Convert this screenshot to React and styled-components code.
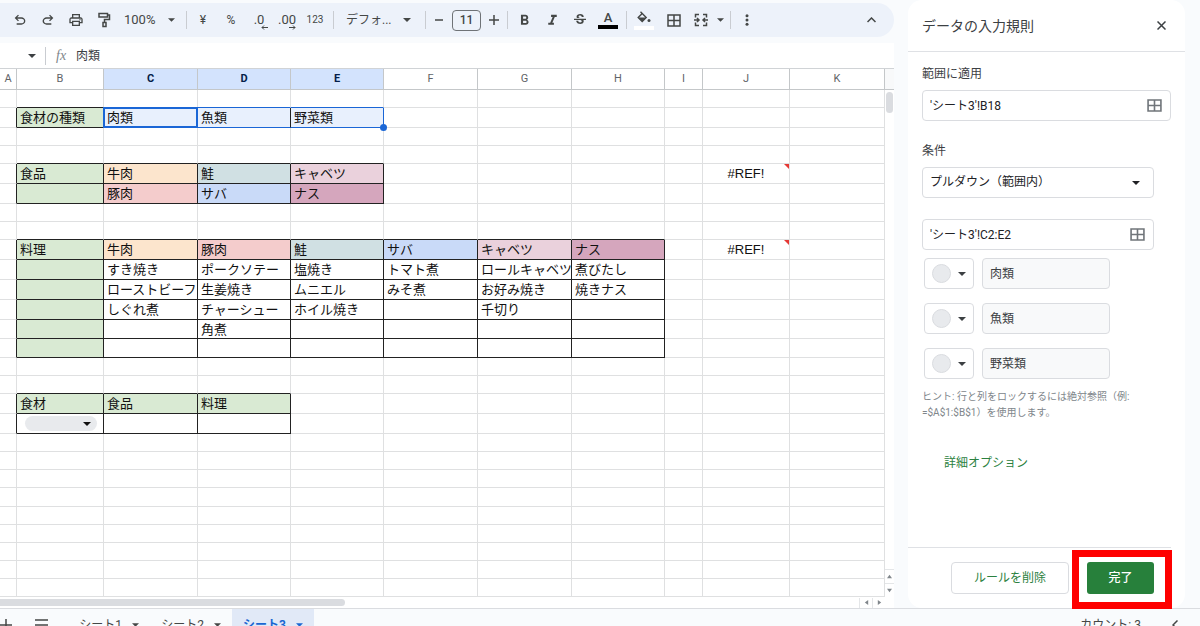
import React from "react";
import styled, { createGlobalStyle, css } from "styled-components";
import { MdFormatBold, MdFormatItalic, MdStrikethroughS } from "react-icons/md";

const GlobalStyle = createGlobalStyle`
  *, *::before, *::after { box-sizing: border-box; }
  html, body { height: 100%; }
  body {
    margin: 0;
    overflow: hidden;
    background: #f9fbfd;
    color: #3c4043;
    font: 12px/16px Roboto, "Noto Sans CJK JP", sans-serif;
  }
  button, input, select { font: inherit; color: inherit; margin: 0; padding: 0; }
  button { background: none; border: 0; cursor: pointer; }
`;

const BLUE = "#1a66d6";
const GREEN = "#d9ead3";
const ORANGE = "#fce5cd";
const RED = "#f4cccc";
const TEAL = "#d0e0e3";
const SKY = "#c9daf8";
const PINK = "#ead1dc";
const MAUVE = "#d5a6bd";

/* ---------- page ---------- */

const Page = styled.div`
  display: flex;
  flex-direction: column;
`;

const Workspace = styled.div`
  display: grid;
  grid-template-columns: minmax(0, 1fr) 277px;
  gap: 14px;
  padding-right: 15px;
`;

const Editor = styled.main`
  min-width: 0;
  padding-top: 3px;
`;

/* ---------- toolbar ---------- */

const Toolbar = styled.div`
  display: flex;
  align-items: center;
  height: 34px;
  padding: 0 9px 0 6px;
  background: #edf2fa;
  border-radius: 0 17px 17px 0;
  color: #444746;
`;

const Tool = styled.button`
  position: relative;
  display: flex;
  align-items: center;
  justify-content: center;
  flex: none;
  width: ${(p) => p.$w || 28}px;
  height: 28px;
  font-size: ${(p) => p.$size || 12}px;
`;

const MenuTool = styled(Tool)`
  justify-content: space-between;
  padding: 0 ${(p) => p.$pad || 0}px;
`;

const Divider = styled.span`
  flex: none;
  width: 1px;
  height: 18px;
  margin: 0 ${(p) => p.$r || 0}px 0 ${(p) => p.$l || 0}px;
  background: #c9ccd1;
`;

const Spacer = styled.span`
  flex: 1;
`;

const SizeInput = styled.input`
  width: 29px;
  height: 21px;
  border: 1px solid #6f7377;
  border-radius: 4px;
  background: transparent;
  text-align: center;
  font-size: 12px;
  font-weight: 500;
`;

const ArrowUnder = styled.svg`
  position: absolute;
  right: 5px;
  bottom: 4px;
`;

const Swatch = styled.span`
  display: flex;
  flex-direction: column;
  align-items: center;
  gap: 1px;
  font: 500 13px/13px Roboto, sans-serif;

  &::after {
    content: "";
    width: 20px;
    height: 4px;
    background: ${(p) => p.$color};
  }
`;

/* ---------- formula bar ---------- */

const FormulaBar = styled.div`
  display: flex;
  align-items: center;
  height: 25px;
  margin-top: 6px;
  padding-left: 24px;
  background: #fff;
`;

const Fx = styled.span`
  width: 20px;
  margin-left: 10px;
  color: #80868b;
  font: italic 14px/18px "Liberation Serif", serif;
`;

const FormulaInput = styled.input`
  flex: 1;
  min-width: 0;
  border: 0;
  background: transparent;
`;

/* ---------- sheet ---------- */

const SheetArea = styled.div`
  display: grid;
  grid-template-columns: minmax(0, 1fr) 9px;
  border-top: 1px solid #d0d3d6;
  background: #fff;
`;

const Sheet = styled.table`
  width: 100%;
  table-layout: fixed;
  border-collapse: separate;
  border-spacing: 0;
`;

const ColHead = styled.th`
  height: 21px;
  padding: 0;
  border-right: 1px solid #c4c7c9;
  border-bottom: 1px solid #c4c7c9;
  background: ${(p) => (p.$on ? "#d3e3fd" : "#fff")};
  color: ${(p) => (p.$on ? "#041e49" : "#5f6368")};
  font-size: 11px;
  line-height: 16px;
  font-weight: ${(p) => (p.$on ? 700 : 400)};
`;

const Row = styled.tr`
  height: ${(p) => p.$h}px;
`;

const Cell = styled.td`
  position: relative;
  height: inherit;
  padding: 0 0 0 3px;
  border-right: 1px solid ${(p) => p.$right};
  border-bottom: 1px solid ${(p) => p.$bottom};
  background: ${(p) => p.$fill || "#fff"};
  color: #111;
  font: 13px/17px "Liberation Sans", "Noto Sans CJK JP", sans-serif;
  white-space: nowrap;
  text-align: ${(p) => (p.$error ? "center" : "left")};
  ${(p) =>
    p.$error &&
    css`
      padding: 0;

      &::after {
        content: "";
        position: absolute;
        top: 0;
        right: 0;
        border-top: 5px solid #e53935;
        border-left: 5px solid transparent;
      }
    `}
`;

const CellText = styled.div`
  height: 17px;
`;

const ActiveFrame = styled.span`
  position: absolute;
  inset: -1px;
  border: 2px solid ${BLUE};
`;

const FillHandle = styled.span`
  position: absolute;
  z-index: 1;
  right: -4px;
  bottom: -4px;
  width: 7px;
  height: 7px;
  border-radius: 50%;
  background: ${BLUE};
`;

const ChipButton = styled.button`
  display: flex;
  align-items: center;
  justify-content: flex-end;
  width: 72px;
  height: 15px;
  margin-left: 5px;
  padding-right: 6px;
  border-radius: 8px;
  background: #e8eaed;
`;

const VScroll = styled.div`
  display: flex;
  flex-direction: column;
  align-items: center;
  background: #fff;
`;

const VHead = styled.span`
  align-self: stretch;
  height: 21px;
  border-bottom: 1px solid #c4c7c9;
  background: #f8f9fa;
`;

const VThumb = styled.span`
  width: 7px;
  height: 21px;
  margin-top: 2px;
  border-radius: 4px;
  background: #dadce0;
`;

const ScrollStep = styled.button`
  display: flex;
  align-items: center;
  justify-content: center;
  width: ${(p) => (p.$side ? 13 : 9)}px;
  height: ${(p) => (p.$side ? 10 : 14)}px;
  border: solid #e4e6e8;
  border-width: ${(p) => (p.$side ? "0 0 0 1px" : "1px 0 0")};
  color: #80868b;
`;

const HScroll = styled.div`
  display: flex;
  align-items: center;
  height: 11px;
  padding-right: 9px;
  background: #fff;
`;

const HThumb = styled.span`
  width: 39%;
  height: 7px;
  border-radius: 0 4px 4px 0;
  background: #dadce0;
`;

/* ---------- side panel ---------- */

const Panel = styled.aside`
  display: flex;
  flex-direction: column;
  border-radius: 14px;
  background: #fff;
`;

const PanelHead = styled.header`
  display: flex;
  align-items: center;
  justify-content: space-between;
  height: 52px;
  padding: 0 16px 0 14px;
  border-bottom: 1px solid #dfe1e5;
`;

const PanelTitle = styled.h1`
  margin: 0;
  font-size: 14px;
  line-height: 20px;
  font-weight: 400;
`;

const CloseButton = styled.button`
  display: flex;
  align-items: center;
  justify-content: center;
  width: 16px;
  height: 16px;
`;

const PanelBody = styled.div`
  display: flex;
  flex-direction: column;
  flex: 1;
  padding: 14px 14px 0;
`;

const FieldLabel = styled.label`
  margin-bottom: 8px;
  font-size: 12px;
  line-height: 16px;
`;

const Field = styled.div`
  display: flex;
  align-items: center;
  height: 31px;
  margin: 0 ${(p) => p.$inset || 0}px ${(p) => p.$gap || 0}px 0;
  padding-right: 8px;
  border: 1px solid #dadce0;
  border-radius: 4px;
  color: #202124;

  > input,
  > select {
    flex: 1;
    min-width: 0;
    height: 100%;
    padding: 0 0 2px 7px;
    border: 0;
    background: transparent;
    appearance: none;
  }
`;

const SelectCaret = styled.span`
  display: flex;
  padding-right: 5px;
  pointer-events: none;
`;

const PickRange = styled.button`
  display: flex;
  color: #70757a;
`;

const OptionRow = styled.div`
  display: flex;
  gap: 8px;
  height: 31px;
  margin: 0 0 14px 2px;
`;

const ColorButton = styled.button`
  display: flex;
  align-items: center;
  justify-content: space-between;
  width: 50px;
  padding: 0 7px;
  border: 1px solid #dadce0;
  border-radius: 4px;

  &::before {
    content: "";
    width: 19px;
    height: 19px;
    border: 1px solid #dadce0;
    border-radius: 50%;
    background: #e8eaed;
  }
`;

const OptionInput = styled.input`
  width: 128px;
  && {
    padding-left: 7px;
  }
  border: 1px solid #dadce0;
  border-radius: 4px;
  background: #f8f9fa;
`;

const Hint = styled.p`
  margin: -6px 0 0;
  color: #80868b;
  font-size: 10px;
  line-height: 16px;
  padding-top: 2px;
`;

const AdvancedLink = styled.a`
  align-self: flex-start;
  margin: 34px 0 0 22px;
  color: #2b8140;
  text-decoration: none;
`;

const PanelFoot = styled.footer`
  display: flex;
  justify-content: flex-end;
  gap: 18px;
  height: 61px;
  margin-right: 14px;
  padding: 14px 17px 0 0;
  border-top: 1px solid #dfe1e5;
`;

const DeleteButton = styled.button`
  width: 118px;
  height: 32px;
  border: 1px solid #dadce0;
  border-radius: 4px;
  color: #2b8140;
`;

const DoneButton = styled.button`
  position: relative;
  width: 67px;
  height: 32px;
  border-radius: 3px;
  background: #27803b;
  color: #fff;
  font-weight: 500;
`;

const Highlight = styled.span`
  position: absolute;
  z-index: 2;
  inset: -12px -18px -15px -15px;
  border: 7px solid #fe0000;
`;

/* ---------- tab bar ---------- */

const TabBar = styled.nav`
  display: flex;
  height: 32px;
  padding-right: 20px;
  border-top: 1px solid #dadce0;
  color: #444746;
`;

const Tab = styled.button`
  display: flex;
  align-items: center;
  justify-content: center;
  gap: 10px;
  width: 82px;
  background: ${(p) => (p.$on ? "#e1e9f7" : "transparent")};
  color: ${(p) => (p.$on ? "#1967d2" : "inherit")};
  font-weight: ${(p) => (p.$on ? 700 : 400)};
`;

const BarIcon = styled.button`
  display: flex;
  align-items: center;
  width: ${(p) => p.$w}px;
`;

const Count = styled.button`
  margin-right: 31px;
`;

/* ---------- icons ---------- */

const Caret = ({ w = 8 }) => (
  <svg width={w} height="4" viewBox="0 0 8 4" fill="currentColor" aria-hidden="true">
    <path d="M0 0h8L4 4z" />
  </svg>
);

const Tri = ({ rotate = 0 }) => (
  <svg width="5" height="5" viewBox="0 0 6 6" fill="currentColor" aria-hidden="true">
    <path d="M0 5h6L3 1z" transform={`rotate(${rotate} 3 3)`} />
  </svg>
);

const Symbol = ({ d, size = 16 }) => (
  <svg width={size} height={size} viewBox="0 -960 960 960" fill="currentColor" aria-hidden="true">
    <path d={d} />
  </svg>
);

const UNDO =
  "M280-200v-80h284q63 0 109.500-40T720-420q0-60-46.500-100T564-560H312l104 104-56 56-200-200 200-200 56 56-104 104h252q97 0 169.500 63T800-420q0 94-72.500 157T564-200H280Z";
const REDO =
  "M396-200q-97 0-169.500-63T154-420q0-94 72.500-157T396-640h252L544-744l56-56 200 200-200 200-56-56 104-104H396q-63 0-109.500 40T240-420q0 60 46.500 100T396-280h284v80H396Z";
const PRINT =
  "M640-640v-120H320v120h-80v-200h480v200h-80Zm80 180q17 0 28.500-11.500T760-500q0-17-11.500-28.500T720-540q-17 0-28.500 11.500T680-500q0 17 11.500 28.500T720-460Zm-80 260v-160H320v160h320Zm80 80H240v-160H80v-240q0-51 35-85.500t85-34.500h560q51 0 85.500 34.500T880-520v240H720v160Zm80-240v-160q0-17-11.500-28.500T760-560H200q-17 0-28.500 11.500T160-520v160h80v-80h480v80h80Z";

const PaintIcon = () => (
  <svg width="14" height="16" viewBox="0 0 14 16" fill="none" stroke="currentColor" strokeWidth="1.5" aria-hidden="true">
    <path d="M2 1.500h8.500v3.500H2zM10.500 3h2v4.500H7.500v3M6 10.500h3v4H6z" />
  </svg>
);

const GridIcon = ({ w = 14, h = 13 }) => (
  <svg width={w} height={h} viewBox="0 0 14 13" preserveAspectRatio="none" fill="none" stroke="currentColor" strokeWidth="1.500" aria-hidden="true">
    <path d="M1 1h12v11H1zM7 1v11M1 6.500h12" />
  </svg>
);

const MergeIcon = () => (
  <svg width="14" height="14" viewBox="0 0 14 14" fill="none" stroke="currentColor" strokeWidth="1.500" aria-hidden="true">
    <path d="M5 1.500H1.500V4.500M9 1.500h3.500V4.500M5 12.500H1.500V9.500M9 12.500h3.500V9.500M0 7h5M3 5l2 2-2 2M14 7H9M11 5L9 7l2 2" />
  </svg>
);

const FillIcon = () => (
  <svg width="14" height="14" viewBox="0 0 14 14" aria-hidden="true">
    <path d="M3.500 .8l5.700 5.700-4 4-4-4 4-4" fill="none" stroke="currentColor" strokeWidth="1.400" />
    <path d="M1.200 6.500h8l-4 4z" fill="currentColor" />
    <circle cx="12" cy="9.600" r="1.500" fill="currentColor" />
  </svg>
);

const MoreIcon = () => (
  <svg width="4" height="12" viewBox="0 0 4 12" fill="currentColor" aria-hidden="true">
    <circle cx="2" cy="1.700" r="1.500" />
    <circle cx="2" cy="6" r="1.500" />
    <circle cx="2" cy="10.300" r="1.500" />
  </svg>
);

const Lines = ({ d, w, h, sw = 1.5 }) => (
  <svg width={w} height={h} viewBox={`0 0 ${w} ${h}`} fill="none" stroke="currentColor" strokeWidth={sw} aria-hidden="true">
    <path d={d} />
  </svg>
);

/* ---------- data ---------- */

const COLUMNS = [
  ["A", 17], ["B", 87], ["C", 94], ["D", 93], ["E", 93], ["F", 94],
  ["G", 94], ["H", 93], ["I", 38], ["J", 87], ["K", null],
];

const ROW_HEIGHTS = [
  18, 20, 18, 18, 20, 20, 18, 18, 20, 20, 20, 20, 19, 19,
  18, 18, 20, 20, 18, 18, 18, 19, 18, 18, 18, 18, 18,
];

const VALUES = {
  B2: "食材の種類", C2: "肉類", D2: "魚類", E2: "野菜類",
  B5: "食品", C5: "牛肉", D5: "鮭", E5: "キャベツ", J5: "#REF!",
  C6: "豚肉", D6: "サバ", E6: "ナス",
  B9: "料理", C9: "牛肉", D9: "豚肉", E9: "鮭", F9: "サバ", G9: "キャベツ", H9: "ナス", J9: "#REF!",
  C10: "すき焼き", D10: "ポークソテー", E10: "塩焼き", F10: "トマト煮", G10: "ロールキャベツ", H10: "煮びたし",
  C11: "ローストビーフ", D11: "生姜焼き", E11: "ムニエル", F11: "みそ煮", G11: "お好み焼き", H11: "焼きナス",
  C12: "しぐれ煮", D12: "チャーシュー", E12: "ホイル焼き", G12: "千切り",
  D13: "角煮",
  B17: "食材", C17: "食品", D17: "料理",
};

const FILLS = {
  B2: GREEN, C2: "#e8f0fd", D2: "#e8f0fd", E2: "#e8f0fd",
  B5: GREEN, B6: GREEN, C5: ORANGE, D5: TEAL, E5: PINK, C6: RED, D6: SKY, E6: MAUVE,
  B9: GREEN, B10: GREEN, B11: GREEN, B12: GREEN, B13: GREEN, B14: GREEN,
  C9: ORANGE, D9: RED, E9: TEAL, F9: SKY, G9: PINK, H9: MAUVE,
  B17: GREEN, C17: GREEN, D17: GREEN,
};

/* [first column, last column, first row, last row] */
const BOXES = [
  [1, 4, 2, 2],
  [1, 4, 5, 6],
  [1, 7, 9, 14],
  [1, 3, 17, 18],
];
const SELECTION = [2, 4, 2, 2];

const inside = ([c1, c2, r1, r2], c, r) => c >= c1 && c <= c2 && r >= r1 && r <= r2;
const boxed = (c, r) => BOXES.some((b) => inside(b, c, r));

function edge(c, r, nc, nr) {
  if (inside(SELECTION, c, r) !== inside(SELECTION, nc, nr)) return BLUE;
  if (boxed(c, r) || boxed(nc, nr)) return "#222";
  return "#dfe0e1";
}

function SheetCell({ c, r }) {
  const id = COLUMNS[c][0] + r;
  const value = VALUES[id];
  return (
    <Cell
      $right={edge(c, r, c + 1, r)}
      $bottom={edge(c, r, c, r + 1)}
      $fill={FILLS[id]}
      $error={value === "#REF!"}
    >
      {value && <CellText>{value}</CellText>}
      {id === "C2" && <ActiveFrame />}
      {id === "E2" && <FillHandle />}
      {id === "B18" && (
        <ChipButton aria-label="食材を選択"><Caret /></ChipButton>
      )}
    </Cell>
  );
}

export default function App() {
  return (
    <Page>
      <GlobalStyle />
      <Workspace>
        <Editor>
          <Toolbar role="toolbar">
            <Tool aria-label="元に戻す"><Symbol d={UNDO} /></Tool>
            <Tool aria-label="やり直し"><Symbol d={REDO} /></Tool>
            <Tool aria-label="印刷"><Symbol d={PRINT} /></Tool>
            <Tool aria-label="書式を貼り付け"><PaintIcon /></Tool>
            <MenuTool $w={63} $pad={6} $size={13}>100%<Caret w={7} /></MenuTool>
            <Divider $l={5} $r={2} />
            <Tool aria-label="通貨">¥</Tool>
            <Tool aria-label="パーセント">%</Tool>
            <Tool aria-label="小数点以下の桁数を減らす" $size={13}>
              .0
              <ArrowUnder width="7" height="5" viewBox="0 0 7 5" fill="none" stroke="currentColor">
                <path d="M7 2.500H1M3 .5L1 2.500l2 2" />
              </ArrowUnder>
            </Tool>
            <Tool aria-label="小数点以下の桁数を増やす" $size={13}>
              .00
              <ArrowUnder width="7" height="5" viewBox="0 0 7 5" fill="none" stroke="currentColor">
                <path d="M0 2.500h6M4 .5l2 2-2 2" />
              </ArrowUnder>
            </Tool>
            <Tool $w={28} $size={10}>123</Tool>
            <Divider $l={4} $r={6} />
            <MenuTool $w={77} $pad={6}>デフォ...<Caret /></MenuTool>
            <Divider $l={8} />
            <Tool $w={26} aria-label="縮小"><Lines w={10} h={10} d="M1 5h8" /></Tool>
            <SizeInput defaultValue="11" aria-label="フォントサイズ" />
            <Tool $w={26} aria-label="拡大"><Lines w={10} h={10} d="M0 5h10M5 0v10" /></Tool>
            <Divider $r={2} />
            <Tool aria-label="太字"><MdFormatBold size={17} /></Tool>
            <Tool aria-label="斜体"><MdFormatItalic size={17} /></Tool>
            <Tool aria-label="取り消し線"><MdStrikethroughS size={16} /></Tool>
            <Tool aria-label="テキストの色"><Swatch $color="#000">A</Swatch></Tool>
            <Divider $l={4} $r={3} />
            <Tool aria-label="塗りつぶしの色"><Swatch $color="#fff"><FillIcon /></Swatch></Tool>
            <Tool $w={32} aria-label="枠線"><GridIcon /></Tool>
            <MenuTool $w={38} $pad={4} aria-label="セルを結合"><MergeIcon /><Caret w={7} /></MenuTool>
            <Divider $l={2} $r={2} />
            <Tool aria-label="その他"><MoreIcon /></Tool>
            <Spacer />
            <Tool aria-label="メニューを非表示"><Lines w={9} h={6} d="M.5 5L4.500 1l4 4" /></Tool>
          </Toolbar>

          <FormulaBar>
            <Tool $w={16} aria-label="名前ボックス"><Caret /></Tool>
            <Divider $l={5} />
            <Fx>fx</Fx>
            <FormulaInput defaultValue="肉類" aria-label="数式バー" />
          </FormulaBar>

          <SheetArea>
            <Sheet>
              <colgroup>
                {COLUMNS.map(([name, w]) => <col key={name} width={w || undefined} />)}
              </colgroup>
              <thead>
                <tr>
                  {COLUMNS.map(([name], c) => (
                    <ColHead key={name} scope="col" $on={c >= 2 && c <= 4}>{name}</ColHead>
                  ))}
                </tr>
              </thead>
              <tbody>
                {ROW_HEIGHTS.map((h, i) => (
                  <Row key={i} $h={h}>
                    {COLUMNS.map(([name], c) => <SheetCell key={name} c={c} r={i + 1} />)}
                  </Row>
                ))}
              </tbody>
            </Sheet>
            <VScroll>
              <VHead />
              <VThumb />
              <Spacer />
              <ScrollStep aria-label="上へ"><Tri /></ScrollStep>
              <ScrollStep aria-label="下へ"><Tri rotate={180} /></ScrollStep>
            </VScroll>
          </SheetArea>
          <HScroll>
            <HThumb />
            <Spacer />
            <ScrollStep $side aria-label="左へ"><Tri rotate={-90} /></ScrollStep>
            <ScrollStep $side aria-label="右へ"><Tri rotate={90} /></ScrollStep>
          </HScroll>
        </Editor>

        <Panel>
          <PanelHead>
            <PanelTitle>データの入力規則</PanelTitle>
            <CloseButton aria-label="閉じる"><Lines w={9} h={9} d="M.5 .5l8 8M8.500 .5l-8 8" /></CloseButton>
          </PanelHead>
          <PanelBody>
            <FieldLabel htmlFor="apply-range">範囲に適用</FieldLabel>
            <Field $gap={22}>
              <input id="apply-range" defaultValue="'シート3'!B18" />
              <PickRange aria-label="データ範囲を選択"><GridIcon w={15} /></PickRange>
            </Field>
            <FieldLabel htmlFor="condition">条件</FieldLabel>
            <Field $inset={17} $gap={21}>
              <select id="condition" defaultValue="range">
                <option value="range">プルダウン（範囲内）</option>
              </select>
              <SelectCaret><Caret /></SelectCaret>
            </Field>
            <Field $inset={17} $gap={8}>
              <input defaultValue="'シート3'!C2:E2" aria-label="条件の範囲" />
              <PickRange aria-label="データ範囲を選択"><GridIcon w={15} /></PickRange>
            </Field>
            {["肉類", "魚類", "野菜類"].map((name) => (
              <OptionRow key={name}>
                <ColorButton aria-label={`${name}の色`}><Caret /></ColorButton>
                <OptionInput defaultValue={name} aria-label={name} readOnly />
              </OptionRow>
            ))}
            <Hint>
              ヒント: 行と列をロックするには絶対参照（例:
              <br />
              =$A$1:$B$1）を使用します。
            </Hint>
            <AdvancedLink href="#advanced">詳細オプション</AdvancedLink>
          </PanelBody>
          <PanelFoot>
            <DeleteButton>ルールを削除</DeleteButton>
            <DoneButton>完了<Highlight /></DoneButton>
          </PanelFoot>
        </Panel>
      </Workspace>

      <TabBar>
        <BarIcon $w={35} aria-label="シートを追加"><Lines w={12} h={12} d="M0 6h12M6 0v12" /></BarIcon>
        <BarIcon $w={33} aria-label="すべてのシート"><Lines w={13} h={12} d="M0 1h13M0 6h13M0 11h13" /></BarIcon>
        <Tab>シート1<Caret w={7} /></Tab>
        <Tab>シート2<Caret w={7} /></Tab>
        <Tab $on>シート3<Caret w={7} /></Tab>
        <Spacer />
        <Count>カウント: 3</Count>
        <BarIcon aria-label="サイドパネルを表示" $w={8}><Lines w={6} h={10} d="M5.500 .5L1 5l4.500 4.500" /></BarIcon>
      </TabBar>
    </Page>
  );
}
